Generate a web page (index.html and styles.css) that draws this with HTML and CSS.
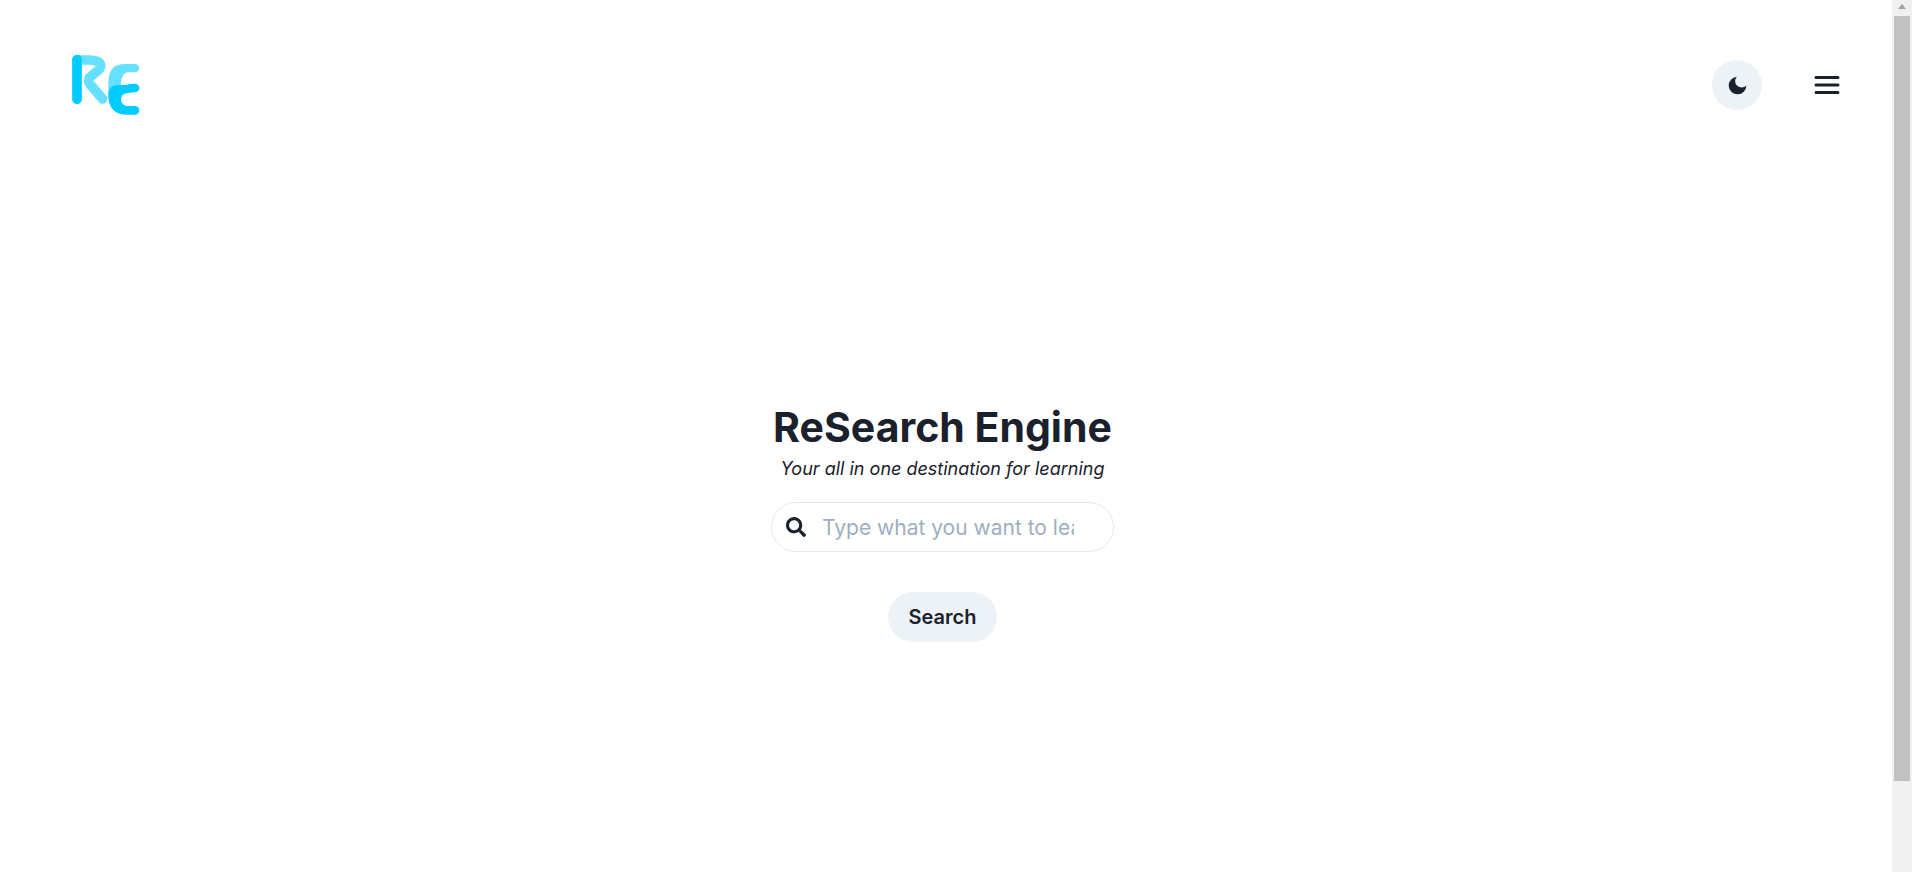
FILE: index.html
```html
<!DOCTYPE html>
<html lang="en">
  <head>
    <meta charset="UTF-8" />
    <title>ReSearch Engine</title>
    <link rel="stylesheet" href="styles.css">
  </head>
  <body>
    <div class="page">
      <header class="header">
        <a class="logo" href="#" aria-label="ReSearch Engine">
          <svg width="100" height="90" viewBox="0 0 300 270" fill="none" stroke-linecap="round" stroke-linejoin="round">
            <path d="M63 60H96Q134 60 134 77Q134 85 124 93L106 108Q91 120 104 135L140 177" stroke="#66e0ff" stroke-width="29" />
            <path d="M157 170V128Q157 72 207 72H237A12.5 12.5 0 0 1 237 97H217Q195 98 194 140Z" fill="#66e0ff" />
            <path d="M63 59V178" stroke="#00ccff" stroke-width="29" />
            <path d="M157 165Q157 135 185 135H207Q222 131 237 131A13 13 0 0 1 237 157L215 159Q195 161 195 178Q196 197 214 198H237A13 13 0 0 1 237 224H210Q157 222 157 165Z" fill="#00ccff" />
          </svg>
        </a>
        <nav class="actions">
          <button class="icon-button theme" type="button" aria-label="Toggle dark mode">
            <svg width="21" height="21" viewBox="110 104 62 62" fill="currentColor">
              <path d="M139 109A26 26 0 1 0 167 135A19 19 0 0 1 139 109Z" />
            </svg>
          </button>
          <button class="icon-button" type="button" aria-label="Open menu">
            <svg width="30" height="30" viewBox="0 0 30 30" fill="none" stroke="currentColor" stroke-width="3" stroke-linecap="round">
              <path d="M4 7.5h22M4 15h22M4 22.5h22" />
            </svg>
          </button>
        </nav>
      </header>

      <main class="main">
        <h1>ReSearch Engine</h1>
        <p class="tagline">Your all in one destination for learning</p>
        <form class="search">
          <label class="search-box">
            <svg width="20" height="20" viewBox="0 0 512 512" fill="currentColor" aria-hidden="true">
              <path d="M505 442.7L405.3 343c-4.5-4.5-10.6-7-17-7H372c27.6-35.3 44-79.7 44-128C416 93.1 322.9 0 208 0S0 93.1 0 208s93.1 208 208 208c48.3 0 92.7-16.4 128-44v16.3c0 6.4 2.5 12.5 7 17l99.7 99.7c9.4 9.4 24.6 9.4 33.9 0l28.3-28.3c9.4-9.4 9.4-24.6.1-34zM208 336c-70.7 0-128-57.2-128-128 0-70.7 57.2-128 128-128 70.7 0 128 57.2 128 128 0 70.7-57.2 128-128 128z" />
            </svg>
            <input type="text" placeholder="Type what you want to learn" aria-label="Search" />
          </label>
          <button class="submit" type="submit">Search</button>
        </form>
      </main>
    </div>

    <div class="scrollbar" aria-hidden="true">
      <div class="arrow"></div>
      <div class="thumb"></div>
    </div>
  </body>
</html>
```
FILE: styles.css
```css
* {
  box-sizing: border-box;
}
body {
  display: flex;
  min-height: 100vh;
  margin: 0;
  font-family: Inter, "Open Sans", sans-serif;
  font-size: 20px;
  color: #1a202c;
  background-color: #fff;
}
button,
input {
  font: inherit;
  color: inherit;
  border: none;
  background: none;
  padding: 0;
}
button {
  cursor: pointer;
}
svg {
  display: block;
}
.page {
  flex: 1;
  display: flex;
  flex-direction: column;
}
.header {
  display: flex;
  justify-content: space-between;
  align-items: center;
  padding: 40px 40px 40px 56px;
}
.actions {
  display: flex;
  gap: 40px;
}
.icon-button {
  display: flex;
  justify-content: center;
  align-items: center;
  width: 50px;
  height: 50px;
  border-radius: 50%;
}
.theme,
.submit {
  background-color: #edf2f7;
}
.theme:hover,
.submit:hover {
  background-color: #e2e8f0;
}
.main {
  flex: 1;
  display: flex;
  flex-direction: column;
  justify-content: center;
  align-items: center;
  padding-right: 7px;
}
h1 {
  margin: 0;
  font-size: 41px;
  line-height: 54px;
  font-weight: 700;
}
.tagline {
  margin: 0 0 18px;
  font-size: 18px;
  line-height: 30px;
  font-style: italic;
}
.search {
  display: flex;
  flex-direction: column;
  align-items: center;
  gap: 40px;
}
.search-box {
  display: flex;
  align-items: center;
  gap: 16px;
  width: 343px;
  height: 50px;
  padding: 0 39px 0 14px;
  border: 1px solid #e2e8f0;
  border-radius: 25px;
}
.search-box input {
  flex: 1;
  min-width: 0;
  font-size: 21px;
  outline: none;
}
.search-box input::placeholder {
  color: #a0aec0;
}
.submit {
  height: 50px;
  padding: 0 21px;
  border-radius: 25px;
  font-weight: 600;
}
.scrollbar {
  display: flex;
  flex-direction: column;
  align-items: center;
  width: 20px;
  height: 100vh;
  background-color: #f0f0f0;
}
.arrow {
  margin: 4px 0 7px;
  border: 4px solid transparent;
  border-top: none;
  border-bottom: 5px solid #a3a3a3;
}
.thumb {
  width: 16px;
  height: 87.7%;
  background-color: #c1c1c1;
}
```
